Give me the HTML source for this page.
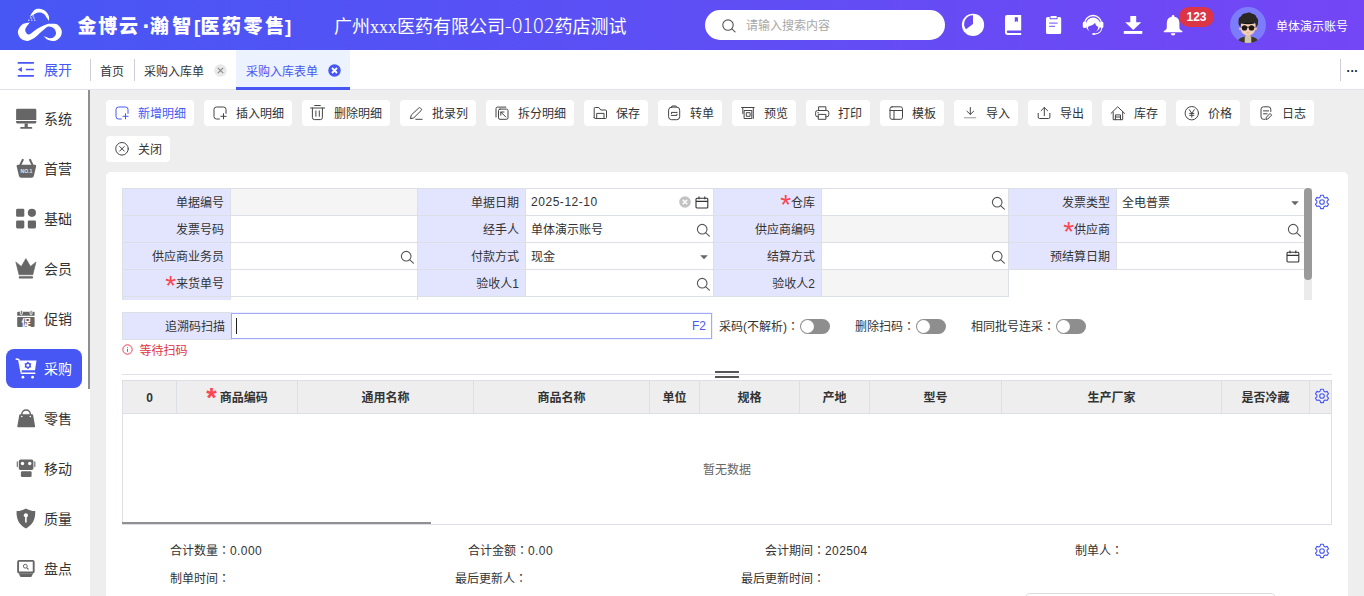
<!DOCTYPE html>
<html lang="zh-CN">
<head>
<meta charset="utf-8">
<title>金博云·瀚智[医药零售]</title>
<style>
*{box-sizing:border-box;margin:0;padding:0}
html,body{width:1364px;height:596px;overflow:hidden;background:#eeeeee}
body{font-family:"Liberation Sans","Noto Sans CJK SC",sans-serif;font-size:12px;color:#333;position:relative}
i{font-style:normal}
.c{font-family:"Liberation Sans","Noto Sans CJK JP","Noto Sans CJK SC",sans-serif}
/* header */
#hd{position:absolute;left:0;top:0;width:1364px;height:50px;background:linear-gradient(90deg,#4757f4,#7446f5)}
#logo{position:absolute;left:10px;top:0}
#brand{position:absolute;left:78px;top:2px;width:230px;height:50px;line-height:50px;color:#fff;font-weight:bold;font-size:19px;letter-spacing:1.800px;white-space:nowrap}
#brand b{position:absolute;top:0}
#corp{position:absolute;left:334px;top:1.500px;height:50px;line-height:50px;color:#fff;font-size:18px;white-space:nowrap;font-family:"Liberation Serif","Noto Sans CJK SC",serif;font-weight:400}
#corp i{font-family:"Noto Sans CJK SC","Liberation Sans",sans-serif;font-size:20px;font-weight:300;line-height:20px}
#search{position:absolute;left:705px;top:10px;width:240px;height:30px;border-radius:15px;background:#fff}
#search span{position:absolute;left:41px;top:1px;line-height:30px;color:#a8a8a8;font-size:12px}
#search svg{position:absolute;left:17px;top:9px}
.hi{position:absolute}
#badge{position:absolute;left:1179px;top:7px;width:35px;height:20px;border-radius:10px;background:#dc3545;color:#fff;font-weight:bold;font-size:12px;line-height:20px;text-align:center}
#avatar{position:absolute;left:1230px;top:7px;width:36px;height:36px;border-radius:50%;background:#7d7cfd;overflow:hidden}
#uname{position:absolute;left:1276px;top:2px;line-height:50px;color:#fff;font-size:12px;white-space:nowrap}
/* tab bar */
#tabs{position:absolute;left:0;top:50px;width:1364px;height:40px;background:#fff;border-bottom:1px solid #e1e4eb}
#expand{position:absolute;left:44px;top:0;line-height:40px;font-size:14px;color:#4757f4}
.tab{position:absolute;top:0;height:40px;line-height:44px;font-size:12px;color:#333;white-space:nowrap}
.vdiv{position:absolute;top:9px;width:1px;height:22px;background:#cdcfda}
#tab-act{position:absolute;left:236px;top:0;width:114px;height:40px;background:#ecf2fe;border-bottom:3px solid #4757f4;color:#4757f4;line-height:44px;padding-left:10px;font-size:12px}
/* sidebar */
#side{position:absolute;left:0;top:90px;width:90px;height:506px;background:#fff}
#sbar{position:absolute;left:88px;top:90px;width:2px;height:299px;background:#8f8f8f}
.mi{position:absolute;left:6px;width:76px;height:40px;border-radius:8px}
.mi.act{margin-top:-0.500px;height:39.500px}
.mi span{position:absolute;left:38px;top:0;line-height:40px;font-size:14px;color:#333;white-space:nowrap}
.mi svg{position:absolute;left:0;top:0}
.mi.act{background:#4757f4}
.mi.act span{color:#fff}
/* toolbar */
.btn{position:absolute;height:26px;background:#fff;border-radius:4px;line-height:26px;font-size:12px;color:#333;white-space:nowrap}
.btn span{position:absolute;right:8px;top:1px}
.btn svg{position:absolute;left:8px;top:5px}
.btn.pri,.btn.pri span{color:#4757f4}
/* card */
#card{position:absolute;left:106px;top:172px;width:1242px;height:430px;background:#fff;border-radius:5px}
#form{position:absolute;left:122px;top:188px;width:1183px;height:112px;overflow:hidden}
.fl,.fv{position:absolute;height:28px;border:1px solid #dcdfe6;line-height:26px;padding-top:1px;white-space:nowrap}
.fl{background:#e3e5fe;text-align:right;padding-right:6px;color:#333}
.fv{background:#fff;padding-left:5px;color:#333}
.fv u{text-decoration:none;letter-spacing:0.540px;position:relative;top:-1px}
.fv.dis{background:#f5f5f5}
.fi{position:absolute}
.st{color:#fb4552;font-size:28px;line-height:0;position:relative;top:7px;margin-right:-0.200px;margin-left:-4px;font-family:"Liberation Sans",sans-serif}
#fsb{position:absolute;left:1304px;top:188px;width:8px;height:112px;background:#ebebeb}
#fsb div{position:absolute;left:0;top:0;width:8px;height:92px;border-radius:4px;background:#9a9a9a}
.gear{position:absolute}
#scanl{position:absolute;left:122px;top:312px;width:109.500px;height:27.500px;border:1px solid #dcdfe6;background:#e3e5fe;text-align:right;padding-right:5.500px;line-height:25px;padding-top:2px}
#scani{position:absolute;left:231px;top:313px;width:481px;height:26px;border:1px solid #a3a9f9;background:#fff;box-shadow:0 0 0 0.500px #dfe1fd}
#scani b{position:absolute;left:4px;top:4px;width:1px;height:16px;background:#222}
#scani span{position:absolute;right:5px;top:0;line-height:24px;color:#4757f4;font-weight:normal}
.tg{position:absolute;top:312.500px;height:28px;line-height:28px;white-space:nowrap}
.sw{position:absolute;top:319px;width:30px;height:15px;border-radius:8px;background:#8e8e8e}
.sw:after{content:"";position:absolute;left:1px;top:1px;width:13px;height:13px;border-radius:50%;background:#fff}
#wait{position:absolute;left:139.500px;top:340.500px;line-height:20px;color:#dc3545}
#split{position:absolute;left:122px;top:374px;width:1210px;height:1px;background:#dfe2ea}
#tbl{position:absolute;left:122px;top:380px;width:1210px;height:145px;border:1px solid #dcdfe6;background:#fff}
#thead{position:absolute;left:-1px;top:-1px;width:1210px;height:34px}
.th{position:absolute;top:0;height:34px;border:1px solid #dcdfe6;background:#eeeeee;text-align:center;line-height:32px;padding-top:0.500px;font-weight:bold;color:#333;white-space:nowrap}
.st2{color:#fb4552;font-size:27px;line-height:0;position:relative;top:5.500px;margin-left:0;margin-right:-0.500px;font-family:"Liberation Sans",sans-serif;font-weight:bold}
#nodata{position:absolute;left:-1px;top:79px;width:1210px;text-align:center;color:#666;line-height:20px}
#hsb{position:absolute;left:122px;top:522px;width:309px;height:2px;background:#909090}
.ft u{text-decoration:none;letter-spacing:0.400px}
.ft{position:absolute;line-height:20px;white-space:nowrap;color:#333}
#pop{position:absolute;left:1025px;top:592.500px;width:251px;height:20px;border:1px solid #dcdcdc;border-radius:5px;background:#fff}
</style>
</head>
<body>
<div id="hd">
  <svg id="logo" width="70" height="50" viewBox="0 0 70 50" fill="#fff"><path d="M19.72,22.49 C18.54,22.80 14.55,22.91 12.59,24.34 C10.63,25.77 8.39,28.82 7.97,31.06 C7.55,33.29 8.60,36.12 10.07,37.77 C11.54,39.42 14.55,40.82 16.79,40.96 C19.03,41.10 21.40,39.84 23.50,38.61 C25.60,37.38 27.28,35.39 29.38,33.57 C31.48,31.76 34.27,28.85 36.09,27.70 C37.91,26.55 38.89,26.48 40.29,26.69 C41.69,26.90 43.53,27.81 44.49,28.96 C45.44,30.10 46.14,32.18 46.00,33.57 C45.86,34.97 44.74,36.58 43.65,37.35 C42.55,38.12 41.13,38.40 39.45,38.19 C37.77,37.98 34.55,36.44 33.57,36.09 C34.27,36.72 35.95,39.06 37.77,39.87 C39.59,40.68 42.39,41.45 44.49,40.96 C46.58,40.47 49.17,38.72 50.36,36.93 C51.55,35.14 52.18,32.31 51.62,30.22 C51.06,28.12 48.61,25.42 47.00,24.34 C45.39,23.26 43.65,23.78 41.97,23.75 C40.29,23.73 39.31,23.38 36.93,24.17 C34.55,24.97 30.64,26.83 27.70,28.54 C24.76,30.24 21.26,33.78 19.31,34.41 C17.35,35.04 16.58,33.29 15.95,32.31 C15.32,31.34 14.90,30.17 15.53,28.54 C16.16,26.90 19.03,23.50 19.72,22.49 Z"/><path d="M19.72,16.79 C20.49,15.67 22.73,11.40 24.34,10.07 C25.95,8.74 27.56,8.67 29.38,8.81 C31.20,8.95 33.69,9.72 35.25,10.91 C36.82,12.10 38.15,14.27 38.78,15.95 C39.41,17.63 38.99,20.14 39.03,20.98 C38.68,20.49 37.84,19.24 36.93,18.05 C36.02,16.86 34.97,14.76 33.57,13.85 C32.18,12.94 30.22,12.45 28.54,12.59 C26.86,12.73 24.97,13.99 23.50,14.69 C22.03,15.39 20.35,16.44 19.72,16.79 Z"/><circle cx="18.89" cy="20.14" r="0.700"/><circle cx="20.98" cy="18.05" r="0.700"/><circle cx="23.08" cy="15.95" r="0.700"/><circle cx="21.82" cy="20.14" r="0.700"/><circle cx="23.92" cy="18.05" r="0.700"/><circle cx="24.76" cy="20.14" r="0.700"/><circle cx="21.99" cy="14.27" r="0.700"/><path d="M35 28.800c3.500-1.800 7.500-1.400 9.800 1.200M38 37c3.200.6 5.700-.8 6.500-3.600" fill="none" stroke="#4757f4" stroke-width="0.400" opacity="0.700"/></svg>
  <div id="brand"><b style="left:-0.500px">金博云</b><b style="left:64.500px;font-size:24px;line-height:48px">·</b><b style="left:72px;letter-spacing:3.300px">瀚智</b><b style="left:116px">[</b><b style="left:122.500px;letter-spacing:2.500px">医药零售</b><b style="left:207px">]</b></div>
  <div id="corp">广州xxx医药有限公司<i>-0102</i>药店测试</div>
  <div id="search"><svg width="14" height="14" viewBox="0 0 14 14" fill="none" stroke="#555" stroke-width="1.100" stroke-linecap="round"><circle cx="6" cy="6.100" r="5.200"/><path d="M9.800 9.900L13.100 12.900"/></svg><span>请输入搜索内容</span></div>
  <svg style="position:absolute;left:950px;top:0" width="280" height="50" viewBox="950 0 280 50" fill="#fff"><circle cx="973.0" cy="24.9" r="11.100"/><path d="M973.00 24.00L973.00 15.20A8.80 8.80 0 0 0 965.97 29.30Z" fill="#684af5"/><path d="M1007 15.100h14.200v15.400h-13.100a1.300 1.300 0 0 0 0 2.600h13.100v1.800h-13.600a2.600 2.600 0 0 1-2.600-2.600v-15.200a2 2 0 0 1 2-2z"/><path d="M1014.800 17.300h3.100v4.900l-1.550-1.300-1.550 1.300z" fill="#6b49f5"/><path d="M1047.600 17h2v1.200a1 1 0 0 0 1 1h6a1 1 0 0 0 1-1v-1.200h2a1.600 1.600 0 0 1 1.600 1.600v13.800a1.600 1.600 0 0 1-1.600 1.600h-12a1.600 1.600 0 0 1-1.600-1.600v-13.800a1.600 1.600 0 0 1 1.600-1.600z"/><rect x="1050.400" y="15.900" width="6.400" height="2.300" rx="0.800"/><path d="M1049.200 23.100h8.400M1049.200 26.400h5.800" stroke="#8d72f7" stroke-width="1.300"/><path d="M1084.600 27.500a8.500 8.500 0 0 1 17 0" fill="none" stroke="#fff" stroke-width="1.300" transform="translate(0,-3.500)"/><rect x="1082.800" y="21.500" width="3.400" height="6.600" rx="1.600"/><rect x="1100" y="21.500" width="3.400" height="6.600" rx="1.600"/><circle cx="1093.100" cy="24.800" r="7.300"/><path d="M1087.900 27.200c1.800-2.200 5-1.200 7.200-4.500c.4 2 1.600 3.600 3.100 4.300c-.2 3.200-2.500 5.600-5.200 5.600s-5-2.200-5.100-5.400z" fill="#6e48f5"/><path d="M1101.800 27.500c0 3.500-2.800 6.300-7.300 6.500" fill="none" stroke="#fff" stroke-width="1.100"/><ellipse cx="1093.800" cy="34" rx="1.700" ry="1"/><path d="M1130.300 16h5.900v6.200h5.100l-8.050 7.900-8.050-7.900h5.100z"/><rect x="1123.800" y="31" width="18.500" height="2.900"/><path d="M1173.100 15a1.300 1.300 0 0 1 1.300 1.300v.5a6.300 6.300 0 0 1 5 6.200v4.500c0 1.500 1 2.600 2.600 3.300a.8.800 0 0 1-.3 1.500h-17.200a.8.800 0 0 1-.3-1.500c1.600-.7 2.600-1.800 2.600-3.300v-4.500a6.300 6.300 0 0 1 5-6.200v-.5a1.300 1.300 0 0 1 1.300-1.300z"/><path d="M1170.800 33.200h4.600a2.300 2.300 0 0 1-4.600 0z"/></svg>
  <div id="badge">123</div>
  <div id="avatar"><svg width="36" height="36" viewBox="1230 7 36 36"><path d="M1237 43.500c.3-3.600 2.800-5.800 6.300-6.600l4.700-1.200 4.700 1.200c3.500.8 6 3 6.300 6.600z" fill="#3d372b"/><path d="M1244.600 43.500l.2-7 3.200-1.300 3.200 1.300.2 7z" fill="#cfc6b0"/><rect x="1245.800" y="33" width="4.400" height="4.200" fill="#e2bfa6"/><circle cx="1240.300" cy="28.800" r="1.400" fill="#e6bea3"/><circle cx="1255.700" cy="28.800" r="1.400" fill="#e6bea3"/><path d="M1240.800 24c0-3 14.400-3 14.400 0v4.500c0 4-3.200 7-7.200 7s-7.200-3-7.200-7z" fill="#f0cfb6"/><path d="M1240.600 27.200c-1.600-1-2.600-3.400-2-5.600c-.6-2.400.8-4.600 2.600-5.400c.8-2 3-3.300 5-3c1.800-1 4.400-.8 5.800.5c2.200 0 4 1.500 4.400 3.500c1.600 1.200 2.200 3.400 1.500 5.300c.3 1.800-.4 3.600-1.700 4.700c.2-2-.5-3.700-1.600-4.600c-4 .9-9 .9-12.600-.1c-1 1.100-1.500 2.800-1.400 4.700z" fill="#2b2723"/><path d="M1241.800 21.900c3.800 1.200 8.600 1.200 12.400 0l.4 1.600c-4 1.100-9.200 1.100-13.200 0z" fill="#17171a"/><circle cx="1244.500" cy="27.900" r="2.700" fill="#1f1611"/><circle cx="1251.500" cy="27.900" r="2.700" fill="#1f1611"/><path d="M1246.800 27.200h2.400" stroke="#1f1611" stroke-width="0.900"/><path d="M1241.900 27.300l-1.300-.4M1254.100 27.300l1.300-.4" stroke="#3a2a20" stroke-width="0.700"/><path d="M1246.900 32.700c.7.400 1.500.4 2.200 0" stroke="#c98b7c" stroke-width="0.600" fill="none"/></svg></div>
  <div id="uname">单体演示账号</div>
</div>
<div id="tabs">
  <svg style="position:absolute;left:17px;top:11px" width="18" height="17" viewBox="17 61 18 17" fill="none" stroke="#4757f4" stroke-width="1.600"><path d="M17.700 62.900h16.200M25.800 69.500h8.100M17.700 75.900h16.200"/><path d="M17.700 69.500l4.200-2.500v5z" fill="#4757f4" stroke="none"/></svg>
  <div id="expand">展开</div>
  <div class="vdiv" style="left:90px"></div>
  <div class="tab" style="left:100px">首页</div>
  <div class="vdiv" style="left:134px"></div>
  <div class="tab" style="left:144px">采购入库单</div>
  <svg style="position:absolute;left:213.500px;top:14px" width="13" height="13" viewBox="0 0 13 13"><circle cx="6.500" cy="6.500" r="6.200" fill="#e9e9e9"/><path d="M3.800 3.800l5.400 5.400M9.200 3.800l-5.400 5.400" stroke="#888" stroke-width="1.100"/></svg>
  <div id="tab-act">采购入库表单</div>
  <svg style="position:absolute;left:327.500px;top:14px" width="13" height="13" viewBox="0 0 13 13"><circle cx="6.500" cy="6.500" r="6.200" fill="#4757f4"/><path d="M4 4l5 5M9 4l-5 5" stroke="#fff" stroke-width="1.800"/></svg>
  <div class="vdiv" style="left:1340px"></div>
  <div class="tab" style="left:1346.500px;letter-spacing:0.600px;color:#222;line-height:37px;font-weight:bold">...</div>
</div>
<div id="side">
<div class="mi" style="top:9px"><span>系统</span></div>
<div class="mi" style="top:59px"><span>首营</span></div>
<div class="mi" style="top:109px"><span>基础</span></div>
<div class="mi" style="top:159px"><span>会员</span></div>
<div class="mi" style="top:209px"><span>促销</span></div>
<div class="mi act" style="top:259px"><span>采购</span></div>
<div class="mi" style="top:309px"><span>零售</span></div>
<div class="mi" style="top:359px"><span>移动</span></div>
<div class="mi" style="top:409px"><span>质量</span></div>
<div class="mi" style="top:459px"><span>盘点</span></div>

</div>
<div id="sbar"></div>
<svg style="position:absolute;left:0;top:90px" width="88" height="506" viewBox="0 90 88 506"><g fill="#666666"><path d="M17.2 108.800h18a1.100 1.100 0 0 1 1.100 1.100v10.100h-20.200v-10.100a1.100 1.100 0 0 1 1.100-1.100z"/><path d="M16.100 121h20.200v1.300a1.100 1.100 0 0 1-1.100 1.100h-18a1.100 1.100 0 0 1-1.100-1.100z"/><rect x="24.600" y="123.400" width="3.200" height="3.800"/><rect x="20.300" y="126.900" width="11.900" height="1.800" rx="0.500"/><path d="M17.800 164.800h17.200a1.200 1.200 0 0 1 1.150 1.500l-2.300 9.600a2.300 2.300 0 0 1-2.200 1.800h-10.500a2.300 2.300 0 0 1-2.200-1.800l-2.300-9.600a1.200 1.200 0 0 1 1.150-1.500z"/><path d="M22.800 159.800l-2.700 5.600M30 159.800l2.700 5.600" stroke="#666666" stroke-width="2" stroke-linecap="round" fill="none"/><text x="26.400" y="173.200" font-size="5" font-weight="bold" fill="#e8e8e8" text-anchor="middle" font-family="Liberation Sans,sans-serif">NO.1</text><rect x="16.100" y="208.800" width="8.200" height="7.900" rx="1.300"/><circle cx="31.900" cy="212.800" r="4.100"/><rect x="16.100" y="220.400" width="8.200" height="8" rx="1.300"/><rect x="27.800" y="220.400" width="8.200" height="8" rx="1.300"/><path d="M15.800 261.900l5.500 4.500 4.600-7.800 4.600 7.800 5.500-4.500-3.200 12.900h-13.800z" stroke="#666666" stroke-width="0.600" stroke-linejoin="round"/><rect x="18.800" y="276.200" width="14.200" height="2.300" rx="0.800"/><path d="M18.200 311.800h15.400a1 1 0 0 1 1 1v3h-17.400v-3a1 1 0 0 1 1-1z"/><rect x="17.200" y="316.900" width="17.400" height="10" rx="0.800"/><rect x="20.400" y="310.300" width="1.900" height="4.300" rx="0.900" stroke="#fff" stroke-width="0.900"/><rect x="30.100" y="310.300" width="1.900" height="4.300" rx="0.900" stroke="#fff" stroke-width="0.900"/><text x="26.200" y="325.700" font-size="9.500" font-weight="bold" fill="#fff" text-anchor="middle" font-family="Noto Sans CJK SC,sans-serif">促</text></g><g fill="#fff"><path d="M19.300 360.400h17.200l-1.500 9.900h-13.800z"/><path d="M16.200 359.100l2.600.5 2.300 12.300" stroke="#fff" stroke-width="1.500" fill="none" stroke-linecap="round" stroke-linejoin="round"/><path d="M21.300 373.300h13.500" stroke="#fff" stroke-width="1.500" stroke-linecap="round"/><circle cx="22.900" cy="377.200" r="1.400"/><circle cx="32.600" cy="377.200" r="1.400"/><polygon points="27.90,361.50 29.30,362.98 31.28,363.45 30.70,365.40 31.28,367.35 29.30,367.82 27.90,369.30 26.50,367.82 24.52,367.35 25.10,365.40 24.52,363.45 26.50,362.98" fill="#4757f4"/><circle cx="27.900" cy="365.400" r="1.400" fill="#fff"/></g><g fill="#666666"><path d="M20.300 414.300h11.800a1 1 0 0 1 1 .8l2 11.200a.8.800 0 0 1-.8.900h-16.200a.8.800 0 0 1-.8-.9l2-11.200a1 1 0 0 1 1-.8z"/><path d="M21.800 416.600v-2.400a4.300 4.300 0 0 1 8.600 0v2.400" fill="none" stroke="#666666" stroke-width="1.500"/><circle cx="21.800" cy="416.500" r="0.800" fill="#fff"/><circle cx="30.300" cy="416.500" r="0.800" fill="#fff"/><rect x="18.800" y="459.600" width="14.600" height="10.500" rx="1.800"/><rect x="20.900" y="471.200" width="10.700" height="5.800" rx="1.200"/><rect x="16.700" y="461.200" width="1.200" height="6" rx="0.600" fill="#777"/><rect x="34.200" y="461.200" width="1.200" height="6" rx="0.600" fill="#777"/><circle cx="22.500" cy="463.500" r="1.700" fill="#fff"/><circle cx="29.700" cy="463.500" r="1.700" fill="#fff"/><path d="M25.900 508.400c2.500 1.600 5.500 2.500 9.300 2.600c.5 8-2.500 14-9.300 17.400c-6.800-3.400-9.800-9.400-9.300-17.400c3.800-.1 6.800-1 9.300-2.600z"/><circle cx="25.900" cy="515.300" r="2.100" fill="#fff"/><rect x="25.100" y="516" width="1.600" height="6.800" rx="0.800" fill="#fff"/><rect x="18.100" y="560.900" width="15.600" height="11.500" rx="1" fill="#fff" stroke="#666666" stroke-width="1.900"/><path d="M18.500 573.200h14.800l-2 3.800h-10.800z"/><circle cx="25.300" cy="566.200" r="1.900" fill="none" stroke="#666666" stroke-width="1"/><path d="M26.700 567.700l1.800 1.800" stroke="#666666" stroke-width="1.100"/></g></svg>
<div class="btn pri" style="left:106px;top:100px;width:88px"><svg width="16" height="16" viewBox="0 0 16 16" fill="none" stroke="#4757f4" stroke-width="1" stroke-linecap="round" stroke-linejoin="round"><path d="M7.400 14H4.500a2.500 2.500 0 0 1-2.500-2.500v-7A2.500 2.500 0 0 1 4.500 2h7A2.500 2.500 0 0 1 14 4.500v3.900"/><path d="M11.500 8.700v5.200M8.900 11.300h5.200"/></svg><span>新增明细</span></div>
<div class="btn" style="left:204px;top:100px;width:88px"><svg width="16" height="16" viewBox="0 0 16 16" fill="none" stroke="#444" stroke-width="1" stroke-linecap="round" stroke-linejoin="round"><path d="M7.400 14H4.500a2.500 2.500 0 0 1-2.500-2.500v-7A2.500 2.500 0 0 1 4.500 2h7A2.500 2.500 0 0 1 14 4.500v3.900"/><path d="M11.500 8.700v5.200M8.900 11.300h5.200"/></svg><span>插入明细</span></div>
<div class="btn" style="left:302px;top:100px;width:88px"><svg width="16" height="16" viewBox="0 0 16 16" fill="none" stroke="#444" stroke-width="1" stroke-linecap="round" stroke-linejoin="round"><path d="M4.700.5h5.600M.600 3h14M2.400 3v9.600a2 2 0 0 0 2 2h6a2 2 0 0 0 2-2V3M5.900 5.900v5.400M9.300 5.900v5.400"/></svg><span>删除明细</span></div>
<div class="btn" style="left:400px;top:100px;width:76px"><svg width="16" height="16" viewBox="0 0 16 16" fill="none" stroke="#444" stroke-width="1" stroke-linecap="round" stroke-linejoin="round"><path d="M10.600 3.100a1.300 1.300 0 0 1 1.900 0l.6.600a1.300 1.300 0 0 1 0 1.900l-7.400 7.300-3.300.800.800-3.300zM7.800 14.300h6.400"/></svg><span>批录列</span></div>
<div class="btn" style="left:486px;top:100px;width:88px"><svg width="16" height="16" viewBox="0 0 16 16" fill="none" stroke="#444" stroke-width="1" stroke-linecap="round" stroke-linejoin="round"><path d="M2 12V3.600a1.500 1.500 0 0 1 1.500-1.500h8.300"/><rect x="4.500" y="4.100" width="9.500" height="10.200" rx="1.500"/><path d="M11.800 12L6.800 7M6.800 10.200V7h3.200"/></svg><span>拆分明细</span></div>
<div class="btn" style="left:584px;top:100px;width:64px"><svg width="16" height="16" viewBox="0 0 16 16" fill="none" stroke="#444" stroke-width="1" stroke-linecap="round" stroke-linejoin="round"><path d="M2.200 12.500v-9a1 1 0 0 1 1-1h3.600l2 2.500h4.700a1 1 0 0 1 1 1v6.500a1 1 0 0 1-1 1h-10.300a1 1 0 0 1-1-1zM4.700 13.500v-5.100h7.300v5.100"/></svg><span>保存</span></div>
<div class="btn" style="left:658px;top:100px;width:64px"><svg width="16" height="16" viewBox="0 0 16 16" fill="none" stroke="#444" stroke-width="1" stroke-linecap="round" stroke-linejoin="round"><rect x="2.600" y="2.100" width="11.100" height="12.600" rx="3"/><path d="M5.900 2.100v-.6a.5.500 0 0 1 .5-.5h3.400a.5.500 0 0 1 .5.500v.6M5.500 8.700V7.400h5.600M10.900 9.200v1.200H5.300"/></svg><span>转单</span></div>
<div class="btn" style="left:732px;top:100px;width:64px"><svg width="16" height="16" viewBox="0 0 16 16" fill="none" stroke="#444" stroke-width="1" stroke-linecap="round" stroke-linejoin="round"><path d="M1.600 2.500h12.500M2.800 2.500v6M13.300 2.500v11M4.500 5.500h7.300v8h-7.300zM6.700 7.700h3.400v3.600h-3.400z"/></svg><span>预览</span></div>
<div class="btn" style="left:806px;top:100px;width:64px"><svg width="16" height="16" viewBox="0 0 16 16" fill="none" stroke="#444" stroke-width="1" stroke-linecap="round" stroke-linejoin="round"><path d="M4.600 5.500V1.800h7.300v3.700M4.600 11.800H3.600a2 2 0 0 1-2-2V7.500a2 2 0 0 1 2-2h9.200a2 2 0 0 1 2 2v2.300a2 2 0 0 1-2 2h-.9M4.600 9.400h7.300v4.900H4.600zM3.800 7.700h.6"/></svg><span>打印</span></div>
<div class="btn" style="left:880px;top:100px;width:64px"><svg width="16" height="16" viewBox="0 0 16 16" fill="none" stroke="#444" stroke-width="1" stroke-linecap="round" stroke-linejoin="round"><rect x="2" y="1.800" width="12.500" height="12.500" rx="2"/><path d="M2 5.500h12.500M6 5.500v8.800"/></svg><span>模板</span></div>
<div class="btn" style="left:954px;top:100px;width:64px"><svg width="16" height="16" viewBox="0 0 16 16" fill="none" stroke="#444" stroke-width="1" stroke-linecap="round" stroke-linejoin="round"><path d="M8.300 2.500v6.900M5 6.300l3.300 3.100 3.300-3.100"/><path d="M2.400 12.800h11.400" stroke="#999"/></svg><span>导入</span></div>
<div class="btn" style="left:1028px;top:100px;width:64px"><svg width="16" height="16" viewBox="0 0 16 16" fill="none" stroke="#444" stroke-width="1" stroke-linecap="round" stroke-linejoin="round"><path d="M8.300 10.600V2.500M5.100 5.700l3.200-3.200 3.300 3.200M2.200 8.400v3.600a1.500 1.500 0 0 0 1.500 1.500h8.700a1.500 1.500 0 0 0 1.500-1.500V8.400"/></svg><span>导出</span></div>
<div class="btn" style="left:1102px;top:100px;width:64px"><svg width="16" height="16" viewBox="0 0 16 16" fill="none" stroke="#444" stroke-width="1" stroke-linecap="round" stroke-linejoin="round"><path d="M1 8.400l6.700-6.600 6.900 6.600M3.200 7v7.700h9.500V7M5.400 14.700V9.900h5.100v4.800M5.400 12h5.100"/></svg><span>库存</span></div>
<div class="btn" style="left:1176px;top:100px;width:64px"><svg width="16" height="16" viewBox="0 0 16 16" fill="none" stroke="#444" stroke-width="1" stroke-linecap="round" stroke-linejoin="round"><circle cx="7.800" cy="8.200" r="6.700"/><path d="M5.300 4.700l2.500 3.600 2.500-3.600M7.800 8.300v3.900M5.700 8.400h4.200M5.700 10.300h4.200"/></svg><span>价格</span></div>
<div class="btn" style="left:1250px;top:100px;width:64px"><svg width="16" height="16" viewBox="0 0 16 16" fill="none" stroke="#444" stroke-width="1" stroke-linecap="round" stroke-linejoin="round"><path d="M12.800 6.500V4.300a2.500 2.500 0 0 0-2.500-2.500H5.500a2.500 2.500 0 0 0-2.500 2.500v7.500a2.500 2.500 0 0 0 2.500 2.500h1.500M5.500 5.900h5.100M5.500 8.800h3.600M12.300 8.700l1.400 1.400-4 4-1.700.3.300-1.700z"/></svg><span>日志</span></div>
<div class="btn" style="left:106px;top:136px;width:64px"><svg width="16" height="16" viewBox="0 0 16 16" fill="none" stroke="#444" stroke-width="1" stroke-linecap="round"><circle cx="8" cy="7.800" r="6.300"/><path d="M5.700 5.500l4.600 4.600M10.300 5.500l-4.600 4.600"/></svg><span>关闭</span></div>

<div id="card"></div>
<div id="form">
<div class="fl" style="left:0.0px;top:0.0px;width:109.0px">单据编号</div><div class="fv dis" style="left:108.0px;top:0.0px;width:188.0px"></div>
<div class="fl" style="left:295.0px;top:0.0px;width:109.0px">单据日期</div><div class="fv " style="left:403.0px;top:0.0px;width:189.0px"><u>2025-12-10</u><svg class="fi" style="right:4.300px;top:6.500px" width="14" height="13" viewBox="0 0 14 13" fill="none" stroke="#333" stroke-width="1.100"><rect x="1" y="2.200" width="11.800" height="9.800" rx="1"/><path d="M1 5.400h11.800M4 0.500v2.800M9.800 0.500v2.800"/></svg><svg class="fi" style="right:22px;top:7px" width="12" height="12" viewBox="0 0 12 12"><circle cx="6" cy="6" r="5.800" fill="#c2c2c2"/><path d="M3.700 3.700l4.600 4.600M8.300 3.700l-4.600 4.600" stroke="#fff" stroke-width="1.400"/></svg></div>
<div class="fl" style="left:591.0px;top:0.0px;width:109.0px"><i class="st">*</i>仓库</div><div class="fv " style="left:699.0px;top:0.0px;width:188.0px"><svg class="fi" style="right:3.300px;top:6.800px" width="14" height="14" viewBox="0 0 14 14" fill="none" stroke="#555" stroke-width="1.100" stroke-linecap="round"><circle cx="6.200" cy="6.200" r="4.800"/><path d="M9.800 9.800L13.400 13.200"/></svg></div>
<div class="fl" style="left:886.0px;top:0.0px;width:109.0px">发票类型</div><div class="fv " style="left:994.0px;top:0.0px;width:189.0px">全电普票<svg class="fi" style="right:5px;top:11.800px" width="8" height="5" viewBox="0 0 8 5"><path d="M0.200 0.300h7.600L4 4.300z" fill="#666"/></svg></div>
<div class="fl" style="left:0.0px;top:27.0px;width:109.0px">发票号码</div><div class="fv " style="left:108.0px;top:27.0px;width:188.0px"></div>
<div class="fl" style="left:295.0px;top:27.0px;width:109.0px">经手人</div><div class="fv " style="left:403.0px;top:27.0px;width:189.0px">单体演示账号<svg class="fi" style="right:3.300px;top:6.800px" width="14" height="14" viewBox="0 0 14 14" fill="none" stroke="#555" stroke-width="1.100" stroke-linecap="round"><circle cx="6.200" cy="6.200" r="4.800"/><path d="M9.800 9.800L13.400 13.200"/></svg></div>
<div class="fl" style="left:591.0px;top:27.0px;width:109.0px">供应商编码</div><div class="fv dis" style="left:699.0px;top:27.0px;width:188.0px"></div>
<div class="fl" style="left:886.0px;top:27.0px;width:109.0px"><i class="st">*</i>供应商</div><div class="fv " style="left:994.0px;top:27.0px;width:189.0px"><svg class="fi" style="right:3.300px;top:6.800px" width="14" height="14" viewBox="0 0 14 14" fill="none" stroke="#555" stroke-width="1.100" stroke-linecap="round"><circle cx="6.200" cy="6.200" r="4.800"/><path d="M9.800 9.800L13.400 13.200"/></svg></div>
<div class="fl" style="left:0.0px;top:54.0px;width:109.0px">供应商业务员</div><div class="fv " style="left:108.0px;top:54.0px;width:188.0px"><svg class="fi" style="right:3.300px;top:6.800px" width="14" height="14" viewBox="0 0 14 14" fill="none" stroke="#555" stroke-width="1.100" stroke-linecap="round"><circle cx="6.200" cy="6.200" r="4.800"/><path d="M9.800 9.800L13.400 13.200"/></svg></div>
<div class="fl" style="left:295.0px;top:54.0px;width:109.0px">付款方式</div><div class="fv " style="left:403.0px;top:54.0px;width:189.0px">现金<svg class="fi" style="right:5px;top:11.800px" width="8" height="5" viewBox="0 0 8 5"><path d="M0.200 0.300h7.600L4 4.300z" fill="#666"/></svg></div>
<div class="fl" style="left:591.0px;top:54.0px;width:109.0px">结算方式</div><div class="fv " style="left:699.0px;top:54.0px;width:188.0px"><svg class="fi" style="right:3.300px;top:6.800px" width="14" height="14" viewBox="0 0 14 14" fill="none" stroke="#555" stroke-width="1.100" stroke-linecap="round"><circle cx="6.200" cy="6.200" r="4.800"/><path d="M9.800 9.800L13.400 13.200"/></svg></div>
<div class="fl" style="left:886.0px;top:54.0px;width:109.0px">预结算日期</div><div class="fv " style="left:994.0px;top:54.0px;width:189.0px"><svg class="fi" style="right:4.300px;top:6.500px" width="14" height="13" viewBox="0 0 14 13" fill="none" stroke="#333" stroke-width="1.100"><rect x="1" y="2.200" width="11.800" height="9.800" rx="1"/><path d="M1 5.400h11.800M4 0.500v2.800M9.800 0.500v2.800"/></svg></div>
<div class="fl" style="left:0.0px;top:81.0px;width:109.0px"><i class="st">*</i>来货单号</div><div class="fv " style="left:108.0px;top:81.0px;width:188.0px"></div>
<div class="fl" style="left:295.0px;top:81.0px;width:109.0px">验收人1</div><div class="fv " style="left:403.0px;top:81.0px;width:189.0px"><svg class="fi" style="right:3.300px;top:6.800px" width="14" height="14" viewBox="0 0 14 14" fill="none" stroke="#555" stroke-width="1.100" stroke-linecap="round"><circle cx="6.200" cy="6.200" r="4.800"/><path d="M9.800 9.800L13.400 13.200"/></svg></div>
<div class="fl" style="left:591.0px;top:81.0px;width:109.0px">验收人2</div><div class="fv dis" style="left:699.0px;top:81.0px;width:188.0px"></div>
<div class="fl" style="left:0px;top:108.0px;width:109.0px"></div><div class="fv" style="left:108.0px;top:108.0px;width:188.0px"></div>
</div>
<div id="fsb"><div></div></div>
<svg class="gear" style="left:1314px;top:194px" width="16" height="16" viewBox="0 0 16 16" fill="none" stroke="#4757f4" stroke-width="1.100" stroke-linejoin="round"><path d="M6.600 1.300h2.800l.5 1.900 1.300.75 1.900-.55 1.400 2.400-1.400 1.400v1.500l1.400 1.400-1.400 2.400-1.900-.55-1.300.75-.5 1.900h-2.800l-.5-1.900-1.300-.75-1.900.55-1.400-2.400 1.400-1.400v-1.500l-1.400-1.400 1.400-2.400 1.900.55 1.300-.75z"/><circle cx="8" cy="8" r="2.300"/></svg>
<div id="scanl">追溯码扫描</div>
<div id="scani"><b></b><span>F2</span></div>
<div class="tg" style="left:719px">采码(不解析)<i class="c" lang="ja">：</i></div><div class="sw" style="left:800px"></div>
<div class="tg" style="left:855px">删除扫码<i class="c" lang="ja">：</i></div><div class="sw" style="left:916px"></div>
<div class="tg" style="left:971px">相同批号连采<i class="c" lang="ja">：</i></div><div class="sw" style="left:1056px"></div>
<svg style="position:absolute;left:122.300px;top:343.800px" width="11" height="11" viewBox="0 0 11 11" fill="none" stroke="#e64257" stroke-width="1"><circle cx="5.500" cy="5.500" r="4.700"/><path d="M5.500 4.800v3M5.500 3v.8"/></svg>
<div id="wait">等待扫码</div>
<div id="split"></div>
<svg style="position:absolute;left:715px;top:371px" width="24" height="7" viewBox="0 0 24 7"><rect x="0" y="0" width="24" height="2" rx="0.300" fill="#555"/><rect x="0" y="5" width="24" height="2" rx="0.300" fill="#555"/></svg>
<div id="tbl">
  <div id="thead"><div class="th" style="left:0.0px;width:55.0px">0</div><div class="th" style="left:54.0px;width:122.0px"><i class="st2">*</i> 商品编码</div><div class="th" style="left:175.0px;width:177.0px">通用名称</div><div class="th" style="left:351.0px;width:177.0px">商品名称</div><div class="th" style="left:527.0px;width:51.0px">单位</div><div class="th" style="left:577.0px;width:101.0px">规格</div><div class="th" style="left:677.0px;width:71.0px">产地</div><div class="th" style="left:747.0px;width:133.0px">型号</div><div class="th" style="left:879.0px;width:221.0px">生产厂家</div><div class="th" style="left:1099.0px;width:89.0px">是否冷藏</div><div class="th" style="left:1187.0px;width:23.0px"></div></div>
  <div id="nodata">暂无数据</div>
</div>
<svg class="gear" style="left:1314px;top:388px" width="16" height="16" viewBox="0 0 16 16" fill="none" stroke="#4757f4" stroke-width="1.100" stroke-linejoin="round"><path d="M6.600 1.300h2.800l.5 1.900 1.300.75 1.900-.55 1.400 2.400-1.400 1.400v1.500l1.400 1.400-1.400 2.400-1.900-.55-1.300.75-.5 1.900h-2.800l-.5-1.900-1.300-.75-1.900.55-1.400-2.400 1.400-1.400v-1.500l-1.400-1.400 1.400-2.400 1.900.55 1.300-.75z"/><circle cx="8" cy="8" r="2.300"/></svg>
<div id="hsb"></div>
<div class="ft" style="left:170px;top:541px">合计数量<i class="c" lang="ja">：</i><u>0.000</u></div>
<div class="ft" style="left:468px;top:541px">合计金额<i class="c" lang="ja">：</i><u>0.00</u></div>
<div class="ft" style="left:765px;top:541px">会计期间<i class="c" lang="ja">：</i><u>202504</u></div>
<div class="ft" style="left:1075px;top:541px">制单人<i class="c" lang="ja">：</i></div>
<div class="ft" style="left:170px;top:569px">制单时间<i class="c" lang="ja">：</i></div>
<div class="ft" style="left:455px;top:569px">最后更新人<i class="c" lang="ja">：</i></div>
<div class="ft" style="left:741px;top:569px">最后更新时间<i class="c" lang="ja">：</i></div>
<svg class="gear" style="left:1314px;top:543px" width="16" height="16" viewBox="0 0 16 16" fill="none" stroke="#4757f4" stroke-width="1.100" stroke-linejoin="round"><path d="M6.600 1.300h2.800l.5 1.900 1.300.75 1.900-.55 1.400 2.400-1.400 1.400v1.500l1.400 1.400-1.400 2.400-1.900-.55-1.300.75-.5 1.900h-2.800l-.5-1.900-1.300-.75-1.900.55-1.400-2.400 1.400-1.400v-1.500l-1.400-1.400 1.400-2.400 1.900.55 1.300-.75z"/><circle cx="8" cy="8" r="2.300"/></svg>
<div id="pop"></div>
</body>
</html>
